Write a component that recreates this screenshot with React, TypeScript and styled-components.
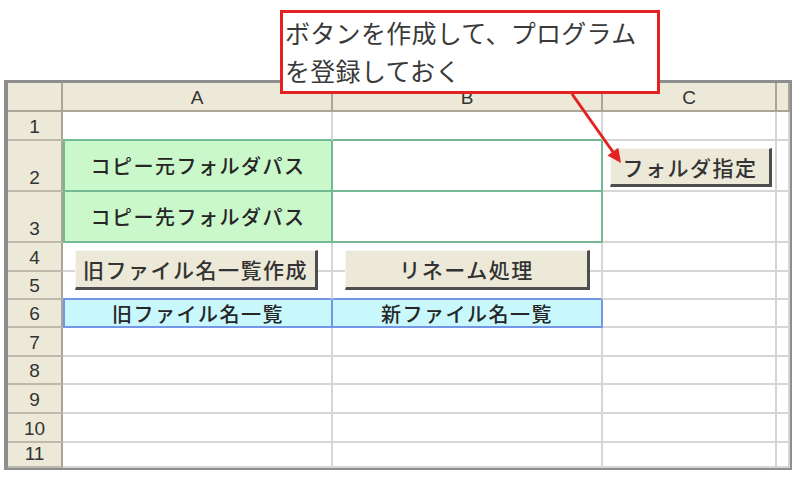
import React from "react";
import styled, { createGlobalStyle } from "styled-components";

const Global = createGlobalStyle`
  html, body { margin: 0; padding: 0; background: #ffffff; }
  * { box-sizing: border-box; }
`;

const C = {
  grid: "#d6d6d6",
  head: "#ece9d8",
  headLine: "#a9a599",
  green: "#74b894",
  greenBg: "#cbf8cb",
  blue: "#7595e6",
  blueBg: "#c8f8fc",
  frame: "#8e8e8e",
  red: "#e42222",
};

const Page = styled.div`
  position: relative;
  width: 800px;
  height: 480px;
  overflow: hidden;
  background: #ffffff;
  padding: 80px 0 0 4px;
`;

const Sheet = styled.div`
  display: grid;
  grid-template-columns: 55px 270px 270px 174px 13px;
  grid-template-rows: 29px 29px 51px 51px 29px 28px 28px 29px 28px 29px 29px 25px;
  width: 788px;
  border-style: solid;
  border-color: ${C.frame};
  border-width: 3px 2px 2px 4px;
  background: #ffffff;
`;

type CellProps = {
  $r: number;
  $c: number;
  $bg?: string;
  $right?: string;
  $bottom?: string;
  $left?: string;
};

const Cell = styled.div<CellProps>`
  grid-row: ${(p) => p.$r};
  grid-column: ${(p) => p.$c};
  display: flex;
  justify-content: center;
  align-items: center;
  background: ${(p) => p.$bg || "#ffffff"};
  border-right: 2px solid ${(p) => p.$right || C.grid};
  border-bottom: 2px solid ${(p) => p.$bottom || C.grid};
  border-left: ${(p) => (p.$left ? `2px solid ${p.$left}` : "none")};
  font-family: "Noto Sans CJK JP", "Noto Sans", sans-serif;
  font-size: 20px;
  font-weight: 500;
  letter-spacing: 1.5px;
  color: #262626;
  overflow: hidden;
  white-space: nowrap;
`;

const HeadCell = styled.div<{ $c: number }>`
  grid-row: 1;
  grid-column: ${(p) => p.$c};
  display: flex;
  justify-content: center;
  align-items: center;
  background: ${C.head};
  border-right: 2px solid ${C.headLine};
  border-bottom: 2px solid ${C.headLine};
  font-family: "Liberation Sans", Arial, sans-serif;
  font-size: 19px;
  color: #333333;
  padding-top: 2px;
`;

const RowHead = styled.div<{ $r: number }>`
  grid-row: ${(p) => p.$r};
  grid-column: 1;
  display: flex;
  justify-content: center;
  align-items: flex-end;
  background: ${C.head};
  border-right: 2px solid ${C.headLine};
  border-bottom: 2px solid #bdb9ad;
  font-family: "Liberation Sans", Arial, sans-serif;
  font-size: 19px;
  line-height: 21px;
  color: #333333;
  padding-bottom: 2px;
`;

const SheetButton = styled.button<{
  $r: string;
  $c: number;
  $m: string;
}>`
  grid-row: ${(p) => p.$r};
  grid-column: ${(p) => p.$c};
  margin: ${(p) => p.$m};
  z-index: 1;
  display: flex;
  align-items: center;
  justify-content: center;
  padding: 0;
  background: ${C.head};
  border-style: solid;
  border-width: 1px 3px 3px 1px;
  border-color: #f7f6f0 #4e4e4e #4e4e4e #f7f6f0;
  font-family: "Noto Sans CJK JP", "Noto Sans", sans-serif;
  font-size: 21px;
  font-weight: 500;
  letter-spacing: 1.5px;
  color: #333333;
  white-space: nowrap;
`;

const Callout = styled.div`
  position: absolute;
  left: 280px;
  top: 10px;
  width: 380px;
  height: 84px;
  z-index: 2;
  background: #ffffff;
  border: 3px solid ${C.red};
  padding: 0 0 0 2px;
  font-family: "Noto Sans CJK JP", "Noto Sans", sans-serif;
  font-size: 25px;
  line-height: 38px;
  color: #3a3a3a;
  letter-spacing: 0.3px;
`;

const Arrow = styled.svg`
  position: absolute;
  left: 0;
  top: 0;
  z-index: 3;
  pointer-events: none;
`;

type Tone = { line: string; bg?: string } | undefined;

const toneOf = (r: number, c: number): Tone => {
  if ((r === 2 || r === 3) && c === 2) return { line: C.green, bg: C.greenBg };
  if ((r === 2 || r === 3) && c === 3) return { line: C.green };
  if (r === 6 && (c === 2 || c === 3)) return { line: C.blue, bg: C.blueBg };
  return undefined;
};

const textOf: Record<string, string> = {
  "2-2": "コピー元フォルダパス",
  "3-2": "コピー先フォルダパス",
  "6-2": "旧ファイル名一覧",
  "6-3": "新ファイル名一覧",
};

export default function App() {
  const cells: React.ReactNode[] = [];
  for (let row = 1; row <= 11; row++) {
    const r = row + 1;
    cells.push(
      <RowHead key={`rh${row}`} $r={r}>
        {row}
      </RowHead>
    );
    for (let c = 2; c <= 5; c++) {
      const tone = toneOf(row, c);
      const below = toneOf(row + 1, c);
      const beside = toneOf(row, c + 1);
      cells.push(
        <Cell
          key={`c${row}-${c}`}
          $r={r}
          $c={c}
          $bg={tone?.bg}
          $right={tone?.line || beside?.line}
          $bottom={tone?.line || below?.line}
          $left={c === 2 ? tone?.line : undefined}
        >
          {textOf[`${row}-${c}`]}
        </Cell>
      );
    }
  }

  return (
    <>
      <Global />
      <Page>
        <Sheet>
          <HeadCell $c={1} />
          <HeadCell $c={2}>A</HeadCell>
          <HeadCell $c={3}>B</HeadCell>
          <HeadCell $c={4}>C</HeadCell>
          <HeadCell $c={5} />
          {cells}
          <SheetButton $r="3" $c={4} $m="7px 5px 5px 7px">
            フォルダ指定
          </SheetButton>
          <SheetButton $r="5 / span 2" $c={2} $m="7px 15px 10px 12px">
            旧ファイル名一覧作成
          </SheetButton>
          <SheetButton $r="5 / span 2" $c={3} $m="7px 13px 10px 12px">
            リネーム処理
          </SheetButton>
        </Sheet>
        <Callout>
          ボタンを作成して、プログラム
          <br />
          を登録しておく
        </Callout>
        <Arrow width="800" height="480" viewBox="0 0 800 480">
          <line
            x1="572"
            y1="94"
            x2="613"
            y2="152"
            stroke={C.red}
            strokeWidth="3"
          />
          <polygon points="621,163 607.5,155.5 618.3,147.8" fill={C.red} />
        </Arrow>
      </Page>
    </>
  );
}
